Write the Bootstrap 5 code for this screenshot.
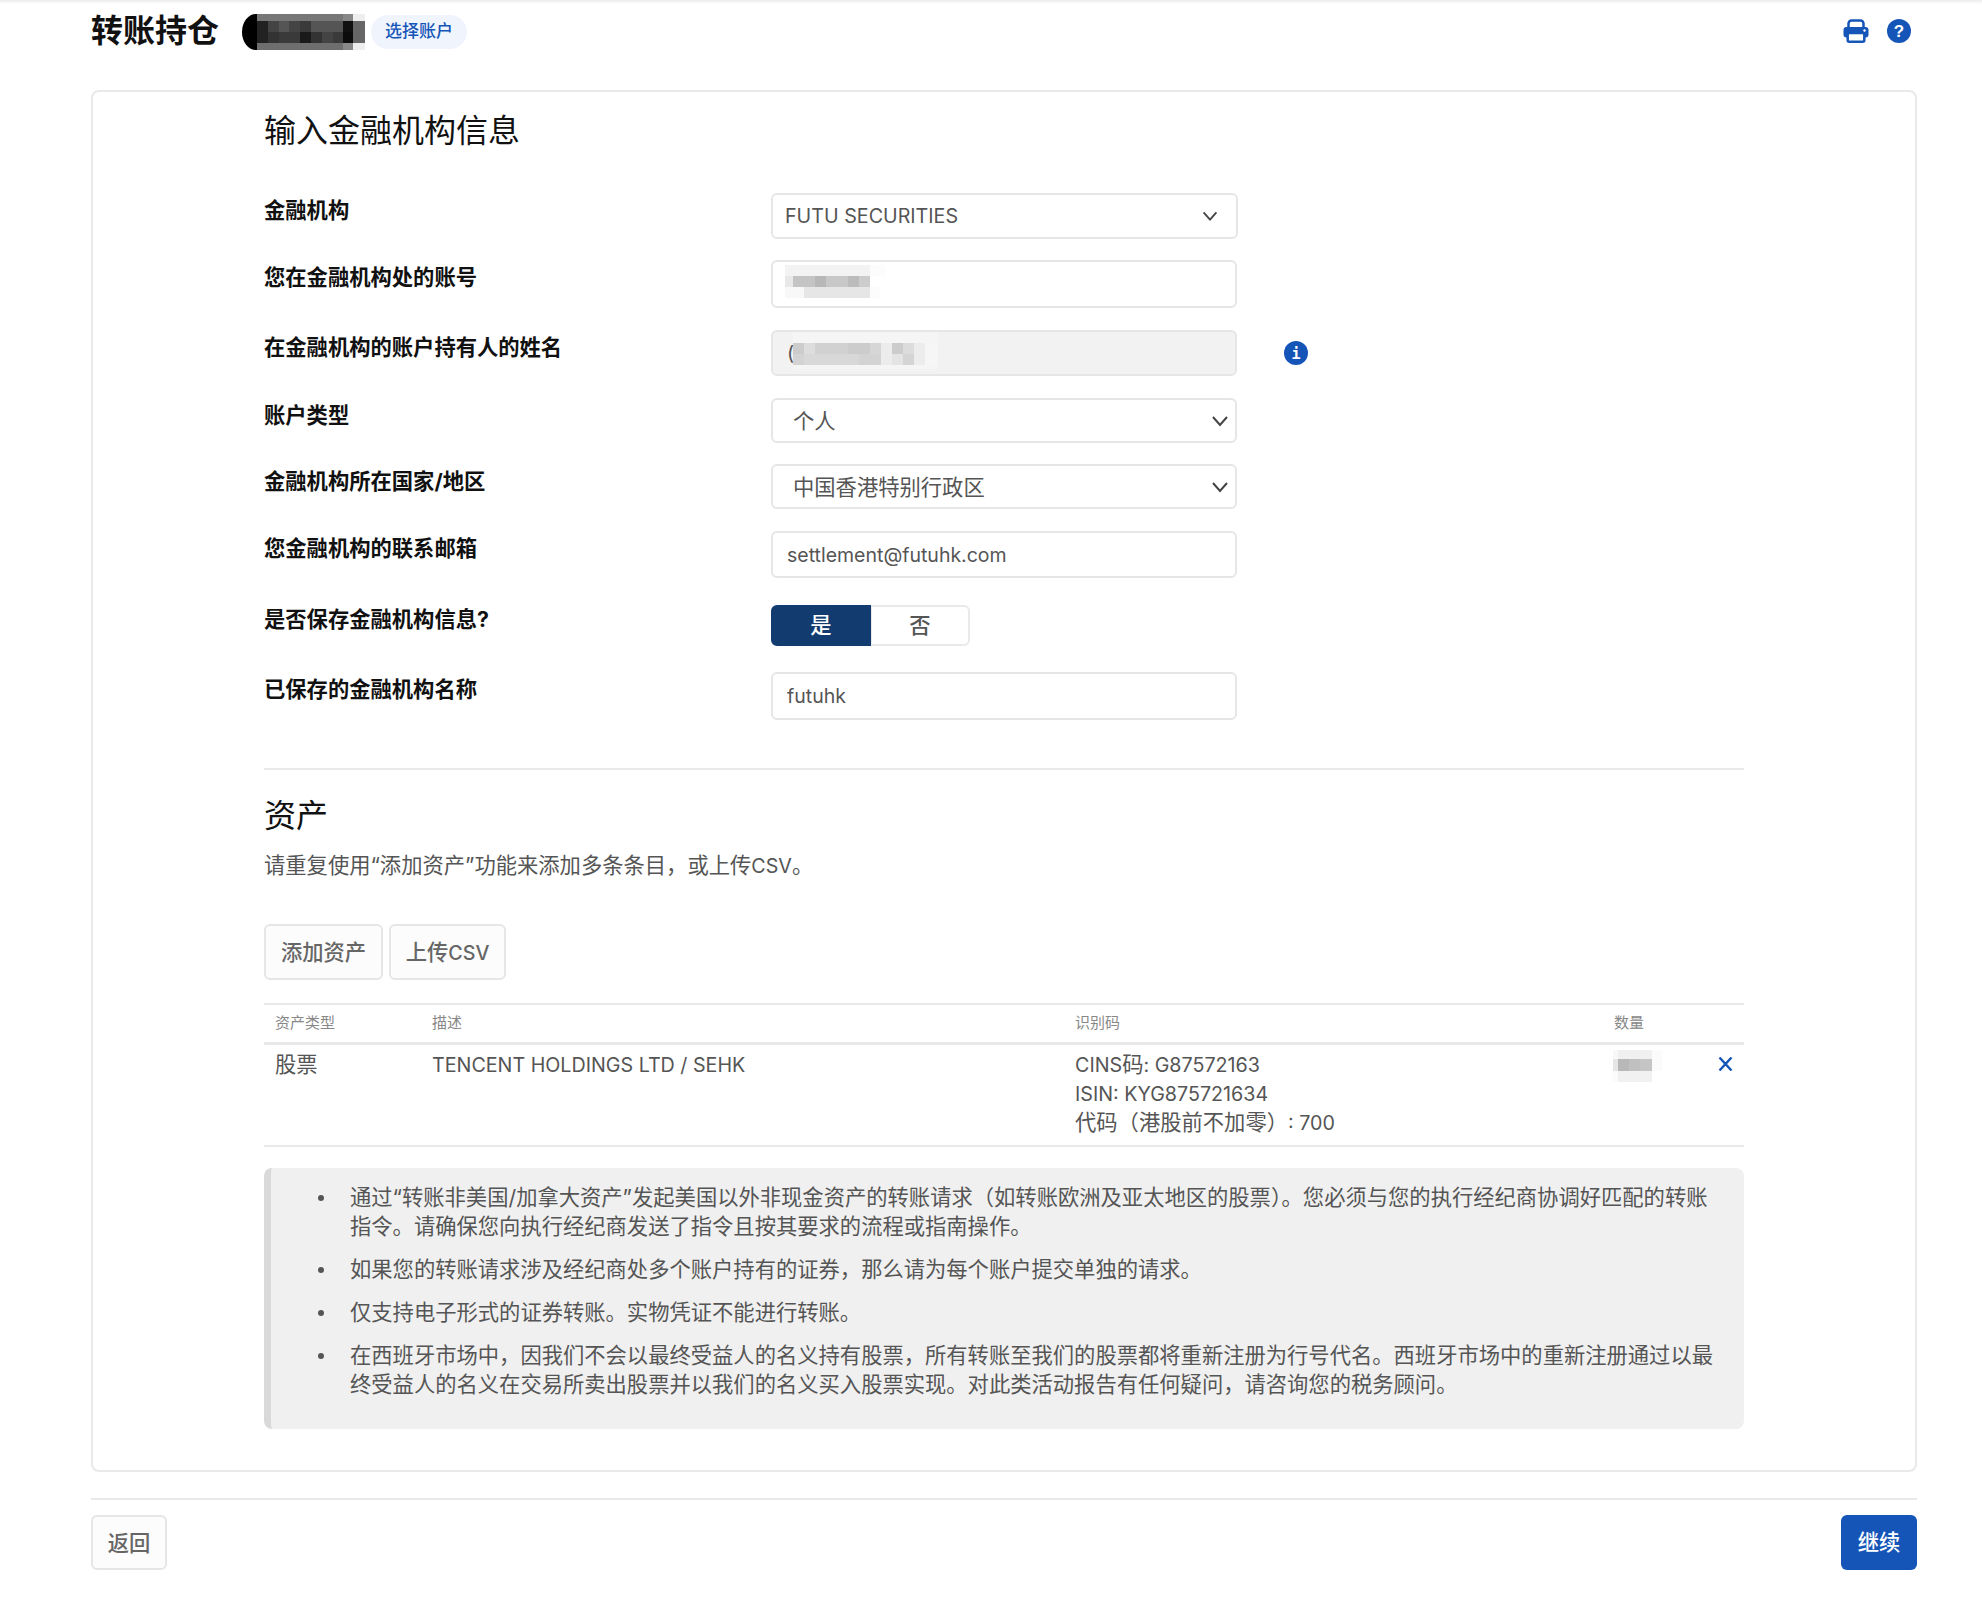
<!DOCTYPE html>
<html lang="zh-CN">
<head>
    <meta charset="UTF-8">
    <meta name="viewport" content="width=device-width, initial-scale=1.0">
    <title>转账持仓</title>
    <link rel="stylesheet" href="https://cdn.jsdelivr.net/npm/bootstrap@5.3.0/dist/css/bootstrap.min.css">
    <script src="https://cdn.jsdelivr.net/npm/bootstrap@5.3.0/dist/js/bootstrap.bundle.min.js"></script>
    <style>
        body { font-family: "Inter", "Noto Sans CJK SC", sans-serif; font-size: 21.3px; color: #555; background: #fff; }
        .top-edge { height: 4px; background: linear-gradient(#ececec, #fff); }
        .page-wrap { width: 1826px; margin-left: 91px; }
        .page-head { height: 54px; }
        .page-title { font-size: 32px; font-weight: 700; color: #111; margin: 0; line-height: 52px; }
        .blur-name { display: block; margin: 2px 0 0 23px; }
        .pick-acct { font-size: 17px; font-weight: 500; color: #1655b8; background: #f0f5fd; border-radius: 17px; padding: 0 14px; height: 34px; line-height: 32px; margin: 2px 0 0 6px; text-decoration: none; }
        .head-icons { gap: 18px; margin-right: 6px; }
        .panel-box { border: 2px solid #e9e9e9; border-radius: 8px; margin-top: 32px; padding: 0 171px 41px; height: 1382px; }
        .panel-title { font-size: 32px; font-weight: 400; color: #111; line-height: 44px; margin: 17px 0 40px; }
        .field-row { display: flex; align-items: flex-start; }
        .field-label { width: 507px; font-size: 21.3px; font-weight: 700; color: #111; line-height: 28px; padding-top: 3px; flex: none; }
        .field-wrap { width: 466px; flex: none; }
        .form-control.fld, .form-select.fld { font-size: 21.3px; color: #555; border: 2px solid #e6e6e6; border-radius: 6px; box-shadow: none; line-height: 28px; padding: 0 14px; }
        .form-control.latin-val { font-size: 19.5px; }
        .form-select.fld { padding-left: 20px; background-position: right 3px center; background-size: 24px 24px; background-image: url("data:image/svg+xml,%3csvg xmlns='http://www.w3.org/2000/svg' viewBox='0 0 24 24'%3e%3cpath fill='none' stroke='%23444' stroke-width='2' d='M5 8l7 8 7-8'/%3e%3c/svg%3e"); }
        .form-select.fld.first-sel { font-size: 19.7px; padding-left: 12px; background-position: right 15px center; background-size: 22px 22px; width: 467px; }
        .form-control.fld:disabled { background: #f2f2f2; }
        .blur-val { position: absolute; left: 14px; top: 5px; }
        .blur-val.on-name { left: 22px; top: 3px; }
        .field-holder { position: relative; }
        .info-dot { margin: 11px 0 0 47px; }
        .h45 { height: 45px; } .h46 { height: 46px; } .h47 { height: 47px; } .h48 { height: 48px; }
        .gap22 { margin-bottom: 22px; }
        .gap21 { margin-bottom: 21px; }
        .save-toggle .btn { width: 100px; height: 41px; padding: 0; font-size: 21.3px; border: 2px solid #e9e9e9; color: #555; background: #fff; font-weight: 500; border-radius: 6px; }
        .save-toggle .btn.on { background: #123b70; border-color: #123b70; color: #fff; position: relative; z-index: 1; }
        .rule-line { border: 0; border-top: 2px solid #e9e9e9; opacity: 1; margin: 0; }
        .assets-title { font-size: 32px; font-weight: 400; color: #111; line-height: 44px; margin: 24px 0 12px; }
        .assets-hint { font-size: 21.3px; line-height: 30px; color: #555; margin: 0 0 43px; }
        .latin-bit { font-size: 19.7px; }
        .ghost-btn { font-size: 21.3px; font-weight: 500; color: #666; background: #fcfcfc; border: 2px solid #e6e6e6; border-radius: 6px; height: 56px; padding: 0; line-height: 28px; width: 119px; }
        .ghost-btn:hover { color: #666; background: #fcfcfc; border-color: #e6e6e6; }
        .ghost-btn.narrow-btn { width: 117px; }
        .table-gap { gap: 6px; margin-bottom: 23px; }
        .asset-table { table-layout: fixed; width: 1480px; margin: 0; color: #555; font-size: 19.7px; border-top: 2px solid #e9e9e9; }
        .asset-table th { font-size: 15px; font-weight: 400; color: #888; height: 39px; padding: 0 11px; vertical-align: middle; border-bottom: 3px solid #e9e9e9; }
        .asset-table td { padding: 6px 11px 7px; line-height: 29px; vertical-align: top; border-bottom: 2px solid #e9e9e9; color: #555; }
        .zh-txt { font-size: 21.3px; line-height: 1; }
        .c1 { width: 157px; } .c2 { width: 643px; } .c3 { width: 539px; } .c4 { width: 96px; }
        .qty-cell { position: relative; }
        .qty-blur { position: absolute; left: 10px; top: 5px; }
        .remove-x { margin: 6px 0 0 8px; display: block; }
        .note-box { margin-top: 21px; height: 261px; background: #f0f0f0; border-left: 7px solid #d9d9d9; border-radius: 8px; padding: 15px 26px 0 0; color: #555; font-size: 21.3px; line-height: 29px; }
        .note-box ul { padding-left: 79px; margin: 0; list-style: none; }
        .note-box li { margin-bottom: 14px; position: relative; }
        .note-box li::before { content: ""; position: absolute; left: -32px; top: 12px; width: 6px; height: 6px; border-radius: 50%; background: #555; }
        .foot-bar { margin-top: 26px; border-top: 2px solid #e9e9e9; padding-top: 15px; }
        .go-btn { font-size: 21.3px; font-weight: 500; color: #fff; background: #1655b8; border: 0; border-radius: 6px; height: 55px; width: 76px; padding: 0; }
        .go-btn:hover { color: #fff; background: #1655b8; }
        .ghost-btn.back-btn { width: 76px; height: 55px; }
    </style>
</head>
<body>
    <div class="top-edge"></div>
    <div class="page-wrap">
        <div class="page-head d-flex align-items-center">
            <h1 class="page-title">转账持仓</h1>
            <svg class="blur-name" width="123" height="36" viewBox="0 0 123 36" shape-rendering="crispEdges">
                <path d="M16 0h-2a14 18 0 0 0 0 36h2z" fill="#000" shape-rendering="auto"/>
                <rect x="15" y="0" width="86" height="7" fill="#777"/>
                <rect x="101" y="0" width="10" height="7" fill="#888"/>
                <rect x="111" y="0" width="12" height="7" fill="#eee"/>
                <rect x="15" y="7" width="11" height="11" fill="#222"/>
                <rect x="26" y="7" width="11" height="11" fill="#444"/>
                <rect x="37" y="7" width="10" height="11" fill="#555"/>
                <rect x="47" y="7" width="11" height="11" fill="#444"/>
                <rect x="58" y="7" width="11" height="11" fill="#3a3a3a"/>
                <rect x="69" y="7" width="32" height="11" fill="#555"/>
                <rect x="101" y="7" width="10" height="11" fill="#111"/>
                <rect x="111" y="7" width="12" height="22" fill="#666"/>
                <rect x="15" y="18" width="11" height="11" fill="#222"/>
                <rect x="26" y="18" width="11" height="11" fill="#333"/>
                <rect x="37" y="18" width="21" height="11" fill="#3a3a3a"/>
                <rect x="58" y="18" width="11" height="11" fill="#1a1a1a"/>
                <rect x="69" y="18" width="11" height="11" fill="#333"/>
                <rect x="80" y="18" width="11" height="11" fill="#444"/>
                <rect x="91" y="18" width="10" height="11" fill="#3a3a3a"/>
                <rect x="101" y="18" width="10" height="11" fill="#0c0c0c"/>
                <rect x="15" y="29" width="86" height="7" fill="#6e6e6e"/>
                <rect x="101" y="29" width="10" height="7" fill="#888"/>
                <rect x="111" y="29" width="12" height="7" fill="#eee"/>
            </svg>
            <a href="#" class="pick-acct">选择账户</a>
            <div class="head-icons d-flex align-items-center ms-auto">
                <svg width="26" height="24" viewBox="0 0 26 24">
                    <path d="M5.5 9V4.500a3 3 0 0 1 3-3h9a3 3 0 0 1 3 3V9" fill="none" stroke="#1655b8" stroke-width="2.500"/>
                    <rect x="0.500" y="8" width="25" height="10.500" rx="3" fill="#1655b8"/>
                    <circle cx="21.500" cy="11.500" r="1.200" fill="#fff"/>
                    <rect x="4.700" y="14" width="16.600" height="8.700" rx="1.500" fill="#fff" stroke="#1655b8" stroke-width="2.500"/>
                </svg>
                <svg width="24" height="24" viewBox="0 0 24 24">
                    <circle cx="12" cy="12" r="12" fill="#1655b8"/>
                    <text x="12" y="18" text-anchor="middle" font-family="Liberation Sans" font-weight="700" font-size="17" fill="#fff">?</text>
                </svg>
            </div>
        </div>

        <div class="panel-box">
            <h2 class="panel-title">输入金融机构信息</h2>
            <form>
                <div class="field-row gap21">
                    <label class="field-label">金融机构</label>
                    <div class="field-wrap">
                        <select class="form-select fld first-sel h46"><option>FUTU SECURITIES</option></select>
                    </div>
                </div>
                <div class="field-row gap22">
                    <label class="field-label">您在金融机构处的账号</label>
                    <div class="field-wrap field-holder">
                        <input class="form-control fld h48" type="text" value="">
                        <svg class="blur-val" width="100" height="33" viewBox="0 0 100 33" shape-rendering="crispEdges">
                            <rect x="0" y="0" width="85" height="11" fill="#f3f3f3"/>
                            <rect x="85" y="0" width="15" height="11" fill="#fcfcfc"/>
                            <rect x="0" y="11" width="8" height="11" fill="#e8e8e8"/>
                            <rect x="8" y="11" width="22" height="11" fill="#c4c4c4"/>
                            <rect x="30" y="11" width="11" height="11" fill="#b8b8b8"/>
                            <rect x="41" y="11" width="22" height="11" fill="#c8c8c8"/>
                            <rect x="63" y="11" width="11" height="11" fill="#bcbcbc"/>
                            <rect x="74" y="11" width="11" height="11" fill="#ccc"/>
                            <rect x="0" y="22" width="19" height="11" fill="#f8f8f8"/>
                            <rect x="19" y="22" width="66" height="11" fill="#e6e6e6"/>
                            <rect x="85" y="22" width="10" height="11" fill="#fcfcfc"/>
                        </svg>
                    </div>
                </div>
                <div class="field-row gap22">
                    <label class="field-label">在金融机构的账户持有人的姓名</label>
                    <div class="field-wrap field-holder">
                        <input class="form-control fld latin-val h46" type="text" value="(" disabled>
                        <svg class="blur-val on-name" width="145" height="40" viewBox="0 0 145 40" shape-rendering="crispEdges">
                            <rect x="0" y="0" width="145" height="10" fill="#f5f5f5"/>
                            <rect x="0" y="10" width="11" height="11" fill="#ccc"/>
                            <rect x="11" y="10" width="11" height="11" fill="#ddd"/>
                            <rect x="22" y="10" width="33" height="11" fill="#d1d1d1"/>
                            <rect x="55" y="10" width="22" height="11" fill="#ccc"/>
                            <rect x="77" y="10" width="11" height="11" fill="#d6d6d6"/>
                            <rect x="88" y="10" width="11" height="22" fill="#ececec"/>
                            <rect x="99" y="10" width="11" height="11" fill="#ccc"/>
                            <rect x="110" y="10" width="11" height="11" fill="#dcdcdc"/>
                            <rect x="121" y="10" width="11" height="22" fill="#ececec"/>
                            <rect x="132" y="10" width="13" height="22" fill="#f6f6f6"/>
                            <rect x="0" y="21" width="11" height="11" fill="#d3d3d3"/>
                            <rect x="11" y="21" width="55" height="11" fill="#d8d8d8"/>
                            <rect x="66" y="21" width="22" height="11" fill="#d3d3d3"/>
                            <rect x="99" y="21" width="11" height="11" fill="#e4e4e4"/>
                            <rect x="110" y="21" width="11" height="11" fill="#d4d4d4"/>
                            <rect x="0" y="32" width="145" height="4" fill="#f5f5f5"/>
                        </svg>
                    </div>
                    <svg class="info-dot" width="24" height="24" viewBox="0 0 24 24">
                        <circle cx="12" cy="12" r="12" fill="#1655b8"/>
                        <text x="12" y="18" text-anchor="middle" font-family="DejaVu Sans Mono" font-weight="700" font-size="15" fill="#fff">i</text>
                    </svg>
                </div>
                <div class="field-row gap21">
                    <label class="field-label">账户类型</label>
                    <div class="field-wrap">
                        <select class="form-select fld h45"><option>个人</option></select>
                    </div>
                </div>
                <div class="field-row gap22">
                    <label class="field-label">金融机构所在国家/地区</label>
                    <div class="field-wrap">
                        <select class="form-select fld h45"><option>中国香港特别行政区</option></select>
                    </div>
                </div>
                <div class="field-row" style="margin-bottom: 27px">
                    <label class="field-label">您金融机构的联系邮箱</label>
                    <div class="field-wrap">
                        <input class="form-control fld latin-val h47" type="text" value="settlement@futuhk.com">
                    </div>
                </div>
                <div class="field-row" style="margin-bottom: 26px">
                    <label class="field-label" style="padding-top: 0">是否保存金融机构信息?</label>
                    <div class="btn-group save-toggle" role="group">
                        <button type="button" class="btn on">是</button>
                        <button type="button" class="btn">否</button>
                    </div>
                </div>
                <div class="field-row" style="margin-bottom: 48px">
                    <label class="field-label">已保存的金融机构名称</label>
                    <div class="field-wrap">
                        <input class="form-control fld latin-val h48" type="text" value="futuhk">
                    </div>
                </div>
            </form>

            <hr class="rule-line">
            <h2 class="assets-title">资产</h2>
            <p class="assets-hint">请重复使用“添加资产”功能来添加多条条目，或上传<span class="latin-bit">CSV</span>。</p>
            <div class="d-flex table-gap">
                <button type="button" class="btn ghost-btn">添加资产</button>
                <button type="button" class="btn ghost-btn narrow-btn">上传<span class="latin-bit">CSV</span></button>
            </div>

            <table class="table asset-table">
                <thead>
                    <tr>
                        <th class="c1">资产类型</th>
                        <th class="c2">描述</th>
                        <th class="c3">识别码</th>
                        <th class="c4">数量</th>
                        <th></th>
                    </tr>
                </thead>
                <tbody>
                    <tr>
                        <td><span class="zh-txt">股票</span></td>
                        <td>TENCENT HOLDINGS LTD / SEHK</td>
                        <td>CINS<span class="zh-txt">码</span>: G87572163<br>ISIN: KYG875721634<br><span class="zh-txt">代码（港股前不加零）</span>: 700</td>
                        <td class="qty-cell">
                            <svg class="qty-blur" width="49" height="32" viewBox="0 0 49 32" shape-rendering="crispEdges">
                                <rect x="0" y="0" width="5" height="9" fill="#f8f8f8"/>
                                <rect x="5" y="0" width="34" height="9" fill="#f0f0f0"/>
                                <rect x="39" y="0" width="10" height="21" fill="#fbfbfb"/>
                                <rect x="0" y="9" width="5" height="12" fill="#e6e6e6"/>
                                <rect x="5" y="9" width="11" height="12" fill="#b8b8b8"/>
                                <rect x="16" y="9" width="11" height="12" fill="#c0c0c0"/>
                                <rect x="27" y="9" width="12" height="12" fill="#c5c5c5"/>
                                <rect x="0" y="21" width="5" height="11" fill="#fbfbfb"/>
                                <rect x="5" y="21" width="34" height="11" fill="#f1f1f1"/>
                            </svg>
                        </td>
                        <td>
                            <svg class="remove-x" width="15" height="14" viewBox="0 0 15 14">
                                <path d="M1.500 0.500L13.500 13.500M13.500 0.500L1.500 13.500" stroke="#1655b8" stroke-width="2.400" fill="none"/>
                            </svg>
                        </td>
                    </tr>
                </tbody>
            </table>

            <div class="note-box">
                <ul>
                    <li>通过“转账非美国/加拿大资产”发起美国以外非现金资产的转账请求（如转账欧洲及亚太地区的股票）。您必须与您的执行经纪商协调好匹配的转账指令。请确保您向执行经纪商发送了指令且按其要求的流程或指南操作。</li>
                    <li>如果您的转账请求涉及经纪商处多个账户持有的证券，那么请为每个账户提交单独的请求。</li>
                    <li>仅支持电子形式的证券转账。实物凭证不能进行转账。</li>
                    <li>在西班牙市场中，因我们不会以最终受益人的名义持有股票，所有转账至我们的股票都将重新注册为行号代名。西班牙市场中的重新注册通过以最终受益人的名义在交易所卖出股票并以我们的名义买入股票实现。对此类活动报告有任何疑问，请咨询您的税务顾问。</li>
                </ul>
            </div>
        </div>

        <div class="foot-bar d-flex justify-content-between">
            <button type="button" class="btn ghost-btn back-btn">返回</button>
            <button type="button" class="btn go-btn">继续</button>
        </div>
    </div>
</body>
</html>
